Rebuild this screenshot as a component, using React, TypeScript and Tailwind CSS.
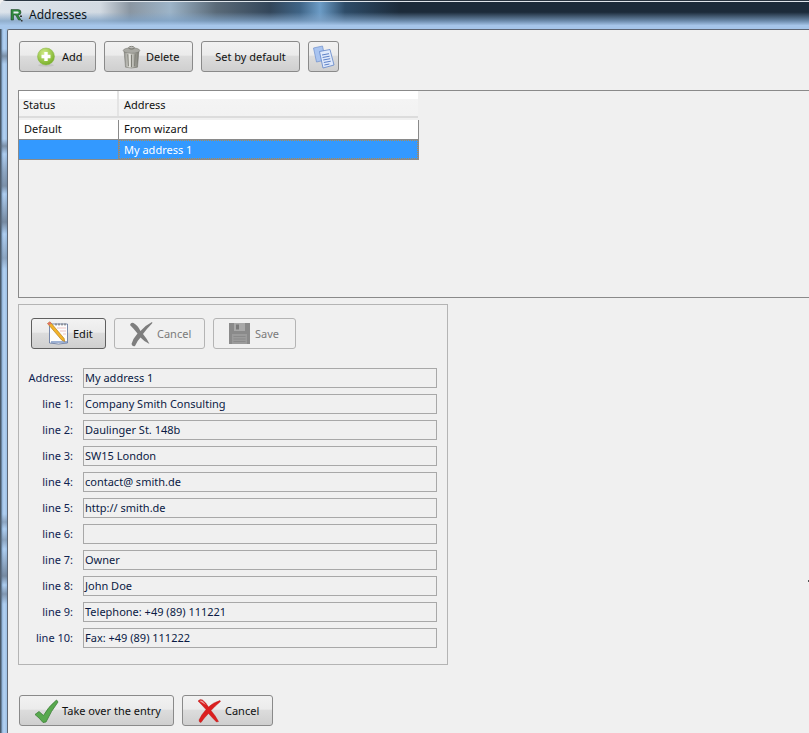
import React from 'react';

function AddIcon() {
  return (
    <svg width="20" height="20" viewBox="0 0 20 20">
      <defs>
        <radialGradient id="addBall" cx="0.4" cy="0.3" r="0.8">
          <stop offset="0" stopColor="#d3ec8a" />
          <stop offset="1" stopColor="#6da81c" />
        </radialGradient>
      </defs>
      <ellipse cx="10" cy="18.300" rx="8" ry="1.400" fill="#c4c4c4" />
      <circle cx="10" cy="9.500" r="8.500" fill="url(#addBall)" stroke="#8ab54a" strokeWidth="0.5" />
      <path d="M8.300 5h3.400v2.800h2.800v3.400h-2.800V14H8.300v-2.800H5.500V7.800h2.800z" fill="#fff" />
    </svg>
  );
}

function TrashIcon() {
  return (
    <svg width="19" height="24" viewBox="0 0 20 26">
      <defs>
        <linearGradient id="canBody" x1="0" x2="1" y1="0" y2="0">
          <stop offset="0" stopColor="#8c8c86" />
          <stop offset="0.35" stopColor="#e4e4de" />
          <stop offset="1" stopColor="#77776f" />
        </linearGradient>
      </defs>
      <path d="M2 7h16l-1.500 17q-6.500 2-13 0z" fill="url(#canBody)" stroke="#6b6b65" strokeWidth="0.5" />
      <ellipse cx="10" cy="6" rx="9" ry="3" fill="#a9a9a3" stroke="#6b6b65" strokeWidth="0.5" />
      <ellipse cx="10" cy="3" rx="3" ry="1.500" fill="none" stroke="#77776f" strokeWidth="1" />
      <path d="M6 10l.6 13M10 10.500V24M14 10l-.6 13" stroke="#77776f" strokeWidth="1" />
    </svg>
  );
}

function PagesIcon() {
  return (
    <svg width="23" height="24" viewBox="0 0 23 24">
      <path d="M1.500 3L10.500 1l3 14-9 2z" fill="#a9c4f0" stroke="#6f8fcb" strokeWidth="0.7" />
      <path d="M7.500 6.500l10.500-2L22 20l-11 3z" fill="#dfe9fb" stroke="#5f84c8" strokeWidth="0.8" />
      <path d="M10 10l7-1.300M10.600 12.500l7-1.300M11.200 15l7-1.300M11.800 17.500l7-1.300M12.400 20l5-1" stroke="#4d74c0" strokeWidth="0.9" />
    </svg>
  );
}

function EditIcon() {
  return (
    <svg width="24" height="25" viewBox="0 0 24 25">
      <path d="M3.500 3H21.500V22q-9 2-18 0z" fill="#fdfdfd" stroke="#5a6f98" strokeWidth="0.8" />
      <path d="M5 21h16" stroke="#5f7fb8" strokeWidth="1.200" />
      <path d="M10 2.500v2M13 2.500v2M16 2.500v2M19 2.500v2" stroke="#555" strokeWidth="0.9" />
      <path d="M11 7h9M14 10h6M17 13h3" stroke="#e4a9a9" strokeWidth="0.7" />
      <path d="M1.500 2.500L4 .8l14 16.500.8 3.200-3-1.300z" fill="#f3b42a" stroke="#a8741a" strokeWidth="0.6" />
      <path d="M1.500 2.500L4 .8 5.400 2.400 2.900 4.200z" fill="#e26f6a" />
    </svg>
  );
}

function DisabledCrossIcon() {
  return (
    <svg width="24" height="27" viewBox="0 0 24 27">
      <path d="M1 5Q2 2 4.500 3Q9 5.500 11.500 11Q16 5.500 23 2Q23.800 2.500 23 3.500Q18 8.500 14 14Q17.500 18 20.500 24Q15 21.500 11.500 17.500Q8 21 6 26Q3.500 27 2.500 24Q4 18.500 8.500 13.500Q5 9 1 5z" fill="#7e7e7e" />
    </svg>
  );
}

function DisabledSaveIcon() {
  return (
    <svg width="23" height="23" viewBox="0 0 23 23">
      <path d="M1 1h21v21H1z" fill="#8a8a8a" />
      <path d="M6 1h11v8H6z" fill="#a9a9a9" />
      <path d="M8 2.500h3v5H8z" fill="#7a7a7a" />
      <path d="M4 12h15v10H4z" fill="#9b9b9b" />
      <path d="M5.500 14.500h12M5.500 17h12M5.500 19.500h12" stroke="#858585" strokeWidth="0.8" />
    </svg>
  );
}

function CheckIcon() {
  return (
    <svg width="25" height="24" viewBox="0 0 25 24">
      <path d="M1 15.500L5 12.500L9.500 16.500Q14 8 22.500 1L24 3Q17 12 12 23L9 23.500Q5.500 19 1 15.500z" fill="#58a94e" stroke="#3d7f38" strokeWidth="0.8" strokeLinejoin="round" />
    </svg>
  );
}

function RedCrossIcon() {
  return (
    <svg width="24" height="25" viewBox="0 0 24 25">
      <path d="M1 3Q3 .5 5.500 2Q9 4.500 11.500 9Q16 4.500 23 2.500L23.500 3.500Q18 8 14 12.500Q18 17 21.500 23.500L19.500 24Q15 19.500 11.500 15.500Q7 20 4 24.500Q2 24.500 2 22Q4.500 16.500 9 11.500Q5 7 1 3z" fill="#dc1f1f" stroke="#b01515" strokeWidth="0.4" />
      <path d="M2.500 3Q4 2 6 3.500L9 7Q5.500 5 2.500 3z" fill="#f0a0a0" />
    </svg>
  );
}

function ToolButton({
  className,
  disabled,
  focused,
  children
}: {
  className: string;
  disabled?: boolean;
  focused?: boolean;
  children: React.ReactNode;
}) {
  return (
    <button
      disabled={disabled}
      className={`flex items-center rounded-[3px] border ${
        disabled
          ? 'border-[#b4b4b4] bg-[#f0f0f0] text-[#7a7a7a]'
          : focused
          ? 'border-[#5f5f5f] bg-[linear-gradient(#f2f2f2_0%,#ebebeb_45%,#dcdcdc_50%,#cfcfcf_100%)] text-[#111]'
          : 'border-[#8a8a8a] bg-[linear-gradient(#f2f2f2_0%,#ebebeb_45%,#dcdcdc_50%,#cfcfcf_100%)] text-[#111]'
      } ${className}`}
    >
      {children}
    </button>
  );
}

const fields = [
  { label: 'Address:', value: 'My address 1' },
  { label: 'line 1:', value: 'Company Smith Consulting' },
  { label: 'line 2:', value: 'Daulinger St. 148b' },
  { label: 'line 3:', value: 'SW15 London' },
  { label: 'line 4:', value: 'contact@ smith.de' },
  { label: 'line 5:', value: 'http:// smith.de' },
  { label: 'line 6:', value: '' },
  { label: 'line 7:', value: 'Owner' },
  { label: 'line 8:', value: 'John Doe' },
  { label: 'line 9:', value: 'Telephone: +49 (89) 111221' },
  { label: 'line 10:', value: 'Fax: +49 (89) 111222' }
];

export default function App() {
  return (
    <div className="flex h-[733px] w-[809px] flex-col overflow-hidden bg-[#f0f0f0] font-['Noto_Sans',sans-serif] text-[11px] leading-[14px] text-[#111]">
      {/* Title bar */}
      <div className="flex h-[29px] shrink-0 items-center rounded-tl-[6px] bg-[linear-gradient(#2a3642_0px,#2a3642_1px,#e0e6ec_1px,#e0e6ec_2px,transparent_2px),linear-gradient(transparent_42%,#7fa2c6cc_72%,#a6c6ea_88%),linear-gradient(90deg,#dce3ea_0px,#d2dae2_100px,#8a96a2_130px,#9db4c8_170px,#5a6a78_216px,#33465a_270px,#3f6486_300px,#6c9cc6_320px,#2e4c68_345px,#1c2b3a_400px,#1c2b3a_100%)] pl-[9px]">
        <svg width="14" height="14" viewBox="0 0 14 14">
          <path d="M2 1.500h7q3 0 3 2.800t-3 2.700l3 5h-2.500L6.500 7H4.500v5H2z" fill="#2f8a3e" stroke="#16331d" strokeWidth="0.5" />
          <path d="M4.500 3.500h4q1.200 0 1.200 1t-1.200 1h-4z" fill="#e8eef2" />
          <path d="M11 7.500h2v1.500h-2zM12 12h1.500v1.500H12z" fill="#333" />
        </svg>
        <span className="ml-[6px] text-[12px] text-[#0c1620]">Addresses</span>
      </div>

      <div className="flex min-h-0 flex-1">
        {/* Window frame */}
        <div className="w-[7px] shrink-0 bg-[linear-gradient(#0000_0px,#0000_20px,#5a687a99_27px,#0000_35px,#0000_110px,#5a687a99_117px,#0000_125px,#5a687a66_143px,#5a687a99_157px,#0000_165px,#5a687aaa_193px,#0000_205px,#5a687a66_229px,#0000_240px,#0000_485px,#5a687a66_493px,#0000_500px,#5a687a66_511px,#0000_520px,#5a687aaa_547px,#0000_556px,#5a687a88_565px,#0000_575px),linear-gradient(90deg,#4a5a6a_0px,#4a5a6a_1px,#8fb3da_2px,#b5d2f2_4px,#9cc0e6_7px)]" />

        <div className="relative flex min-w-0 flex-1 flex-col rounded-tl-[2px] border-t border-l border-[#5d6674] bg-[#f0f0f0] pl-[11px]">
          {/* Toolbar */}
          <div className="mt-[11px] flex h-[31px] gap-[8px]">
            <ToolButton className="w-[77px] gap-[6px] pl-[16px]">
              <AddIcon />
              <span>Add</span>
            </ToolButton>
            <ToolButton className="w-[89px] gap-[5px] pl-[17px]">
              <TrashIcon />
              <span>Delete</span>
            </ToolButton>
            <ToolButton className="w-[99px] justify-center">
              <span>Set by default</span>
            </ToolButton>
            <ToolButton className="w-[31px] justify-center">
              <PagesIcon />
            </ToolButton>
          </div>

          {/* Address table */}
          <div className="mt-[18px] -ml-[1px] h-[208px] w-[800px] shrink-0 border border-[#8a8a8a] bg-[#f0f0f0]">
            <div className="flex h-[27px] w-[399px] border-b-2 border-b-[#dcdcdc] bg-[linear-gradient(#ffffff_0%,#ffffff_30%,#f4f4f4_31%,#f2f2f2_100%)]">
              <div className="flex w-[100px] items-center border-r-2 border-r-[#e4e4e4] pl-[4px] pt-[3px]">Status</div>
              <div className="flex flex-1 items-center pl-[5px] pt-[3px]">Address</div>
            </div>
            <div className="mt-[2px] w-[400px] border-r border-r-[#8a8a8a]">
              <div className="flex h-[20px] border-b border-b-[#8a8a8a] bg-white">
                <div className="flex w-[100px] items-center border-r border-r-[#8a8a8a] pb-[1px] pl-[5px]">Default</div>
                <div className="flex flex-1 items-center pb-[1px] pl-[5px]">From wizard</div>
              </div>
              <div className="flex h-[20px] border-b border-b-[#8a8a8a] bg-[#3399ff] text-white">
                <div className="w-[100px] border-r border-r-[#8a8a8a]" />
                <div className="flex flex-1 items-center border border-dotted border-[#b08a50] pl-[4px]">My address 1</div>
              </div>
            </div>
          </div>

          {/* Detail panel */}
          <div className="mt-[6px] -ml-[1px] flex h-[361px] w-[430px] shrink-0 flex-col border border-[#b4b4b4] pl-[12px] pr-[10px] pt-[13px]">
            <div className="flex h-[31px] gap-[8px]">
              <ToolButton focused className="w-[75px] gap-[3px] pl-[14px]">
                <EditIcon />
                <span>Edit</span>
              </ToolButton>
              <ToolButton disabled className="w-[91px] gap-[4px] pl-[14px]">
                <DisabledCrossIcon />
                <span>Cancel</span>
              </ToolButton>
              <ToolButton disabled className="w-[83px] gap-[4px] pl-[14px]">
                <DisabledSaveIcon />
                <span>Save</span>
              </ToolButton>
            </div>
            <div className="mt-[19px] flex flex-col gap-[6px]">
              {fields.map((field) => (
                <div key={field.label} className="flex h-[20px] items-center">
                  <label className="-ml-[4px] w-[46px] shrink-0 whitespace-nowrap text-right text-[#0f2350]">
                    {field.label}
                  </label>
                  <div className="ml-[10px] flex h-[20px] w-[354px] shrink-0 items-center border border-[#a8a8a8] bg-[#f0f0f0] pl-[1px] text-[#0a1a44]">
                    {field.value}
                  </div>
                </div>
              ))}
            </div>
          </div>

          {/* Dialog actions */}
          <div className="mt-[30px] flex h-[31px] gap-[8px]">
            <ToolButton className="w-[155px] gap-[3px] pl-[14px]">
              <CheckIcon />
              <span>Take over the entry</span>
            </ToolButton>
            <ToolButton className="w-[91px] gap-[4px] pl-[14px]">
              <RedCrossIcon />
              <span>Cancel</span>
            </ToolButton>
          </div>

          {/* stray pixel at the window's right edge */}
          <span className="absolute top-[550px] right-0 h-[2px] w-[1px] bg-[#555]" />
        </div>
      </div>
    </div>
  );
}
